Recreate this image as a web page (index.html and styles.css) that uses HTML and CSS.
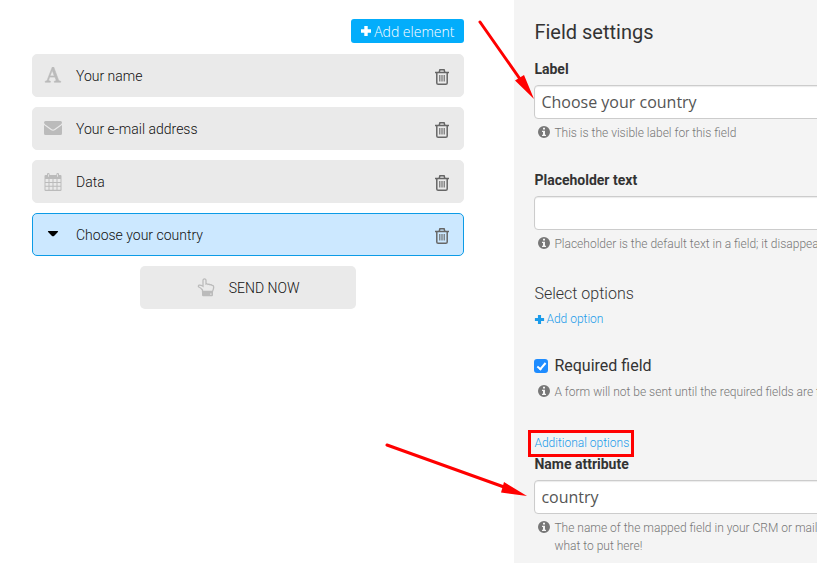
FILE: index.html
```html
<!DOCTYPE html>
<html lang="en">
  <head>
    <meta charset="utf-8" />
    <title>Form editor</title>
    <link rel="stylesheet" href="styles.css" />
  </head>
  <body>
    <svg class="sprite" aria-hidden="true">
      <symbol id="plus" viewBox="0 0 12 12">
        <path d="M4.300 1h3.400v3.300H11v3.400H7.700V11H4.300V7.700H1V4.300h3.300z" />
      </symbol>
      <symbol id="trash" viewBox="0 0 16 18">
        <g fill="none" stroke="currentColor" stroke-width="1.500">
          <path d="M1 4.500h14M5.200 4.200l.7-2.400h4.200l.7 2.400" />
          <path d="M2.800 4.500v10.400q0 1.400 1.400 1.400h7.600q1.400 0 1.400-1.400V4.500" />
          <path d="M5.800 7v6.500M8 7v6.500M10.200 7v6.500" stroke-width="1.100" />
        </g>
      </symbol>
      <symbol id="info" viewBox="0 0 12 12">
        <path fill-rule="evenodd" d="M6 0a6 6 0 1 1 0 12A6 6 0 0 1 6 0zM5 1.800v1.700h2V1.800zM4 4.700v1.200h1v2.900H4V10h4V8.800H7V4.700z" />
      </symbol>
    </svg>

    <div class="page">
      <main class="builder">
        <button type="button" class="add-element">
          <svg class="icon-plus"><use href="#plus" /></svg>
          Add element
        </button>

        <ul class="elements">
          <li class="element">
            <svg class="element-icon" viewBox="0 0 18 18">
              <path fill-rule="evenodd" stroke="currentColor" stroke-width=".6" d="M8.300 0h1.400l4.700 12.700q.5 1.500 2.300 1.600v.9h-6.400v-.9q2.200 0 1.700-1.500l-1-2.700H5.700l-.8 2.200q-.7 1.900 1.500 2v.9H1.200v-.9q1.600-.1 2.200-1.600zM6.100 8.900h4.200L8.200 3.300z" />
            </svg>
            <span class="element-name">Your name</span>
            <button type="button" class="delete" aria-label="Delete Your name">
              <svg><use href="#trash" /></svg>
            </button>
          </li>
          <li class="element">
            <svg class="element-icon" viewBox="0 0 18 18">
              <path d="M1.500 1h15Q18 1 18 2.500 18 3.600 16.800 4.500L10.500 9q-1.500 1-3 0L1.200 4.500Q0 3.600 0 2.500 0 1 1.500 1z" />
              <path d="M0 5l6.800 4.900q2.200 1.500 4.400 0L18 5v8.500q0 1.500-1.500 1.500h-15Q0 15 0 13.500z" />
            </svg>
            <span class="element-name">Your e-mail address</span>
            <button type="button" class="delete" aria-label="Delete Your e-mail address">
              <svg><use href="#trash" /></svg>
            </button>
          </li>
          <li class="element">
            <svg class="element-icon tall" viewBox="0 0 18 18">
              <path fill-rule="evenodd" d="M1.500 2H3V1q0-1 1.300-1t1.300 1v1h6.800V1q0-1 1.300-1T15 1v1h1.500q1 0 1 1v13.800q0 1.200-1 1.200h-15q-1 0-1-1.200V3q0-1 1-1zM1.500 6v2.900h3V6zm4 0v2.900h3V6zm4 0v2.900h3V6zm4 0v2.900h3V6zM1.500 9.900v2.900h3V9.900zm4 0v2.900h3V9.900zm4 0v2.900h3V9.900zm4 0v2.900h3V9.900zM1.500 13.800v3h3v-3zm4 0v3h3v-3zm4 0v3h3v-3zm4 0v3h3v-3zM4 1.200v2.600h.8V1.200zm9.200 0v2.600h.8V1.200z" />
            </svg>
            <span class="element-name">Data</span>
            <button type="button" class="delete" aria-label="Delete Data">
              <svg><use href="#trash" /></svg>
            </button>
          </li>
          <li class="element selected">
            <svg class="element-icon" viewBox="0 0 18 18">
              <path d="M4.500 5h9q1 0 .4 1L10 9.900q-1 .9-2 0L4.100 6q-.6-1 .4-1z" />
            </svg>
            <span class="element-name">Choose your country</span>
            <button type="button" class="delete" aria-label="Delete Choose your country">
              <svg><use href="#trash" /></svg>
            </button>
          </li>
        </ul>

        <button type="button" class="send">
          <svg viewBox="0 0 18 20">
            <path fill="none" stroke="currentColor" stroke-width="1.300" d="M5.500 13.500V12Q3.800 9.800 1.800 9 .8 8 1.900 7.200 3.500 6.700 6 8.300V2.200Q6.200.8 7.500.8T9 2.200V6q1.200-.5 2 .4 1.400-.5 2.100.4 1.400-.4 2 .6 1.600 0 1.600 1.700 0 2-1.200 4.400z" />
            <path fill-rule="evenodd" d="M5 13.500h11v3.600q0 1.200-1.200 1.200H6.200Q5 18.300 5 17.100zm8.200 1.900v1.300h1.300v-1.300z" />
          </svg>
          SEND NOW
        </button>
      </main>

      <aside class="settings">
        <form class="settings-form">
          <h2>Field settings</h2>

          <div class="field">
            <label class="caption" for="label">Label</label>
            <input type="text" id="label" value="Choose your country" />
            <p class="hint"><svg><use href="#info" /></svg>This is the visible label for this field</p>
          </div>

          <div class="field">
            <label class="caption" for="placeholder">Placeholder text</label>
            <input type="text" id="placeholder" />
            <p class="hint"><svg><use href="#info" /></svg>Placeholder is the default text in a field; it disappears</p>
          </div>

          <div class="field options">
            <h3>Select options</h3>
            <a class="link" href="#"><svg class="icon-plus"><use href="#plus" /></svg> Add option</a>
          </div>

          <div class="field required">
            <label class="check"><input type="checkbox" checked /> Required field</label>
            <p class="hint"><svg><use href="#info" /></svg>A form will not be sent until the required fields are filled</p>
          </div>

          <a class="link additional" href="#">Additional options</a>
          <div class="field">
            <label class="caption" for="name">Name attribute</label>
            <input type="text" id="name" value="country" />
            <p class="hint"><svg><use href="#info" /></svg>The name of the mapped field in your CRM or mailing<br />what to put here!</p>
          </div>
        </form>
      </aside>
    </div>

    <!-- arrows drawn over the editor -->
    <svg class="arrows" width="817" height="563" aria-hidden="true">
      <path d="M480 22L520 79M387 445L504 487" />
      <path class="head" d="M515 80.500L524 75l10 24zM504 482l-3 10.500 26 3.500z" />
    </svg>
  </body>
</html>
```
FILE: styles.css
```css
:root {
  --blue: #03a9f4;
  --link: #1a9bea;
  --panel: #f4f4f4;
  --item: #eaeaea;
  --text: #333;
  --mark: #f00;
}

* {
  box-sizing: border-box;
}

body {
  margin: 0;
  background: #fff;
  color: var(--text);
  font-family: Roboto, "Liberation Sans", sans-serif;
}

button {
  border: none;
  font-family: inherit;
  cursor: pointer;
}

svg {
  fill: currentColor;
}

.sprite {
  display: none;
}

.page {
  display: grid;
  grid-template-columns: 17fr 10fr;
  min-height: 100vh;
}

.builder {
  display: flex;
  flex-direction: column;
  padding: 19px 50px 0 32px;
}

.add-element {
  align-self: flex-end;
  display: flex;
  align-items: center;
  gap: 2px;
  height: 24px;
  padding: 0 10px 0 9px;
  border-radius: 3px;
  background: #03adfb;
  color: #fff;
  font-family: "Open Sans", sans-serif;
  font-size: 14px;
  font-weight: 300;
}

.icon-plus {
  width: 12px;
  height: 12px;
}

.elements {
  display: flex;
  flex-direction: column;
  gap: 10px;
  margin: 11px 0 10px;
  padding: 0;
  list-style: none;
}

.element {
  display: flex;
  align-items: center;
  height: 43px;
  padding: 0 13px 0 11px;
  border: 1px solid var(--item);
  border-radius: 5px;
  background: var(--item);
  font-size: 14px;
  font-weight: 300;
  color: #111;
}

.element-icon {
  width: 18px;
  height: 18px;
  margin-right: 14px;
  color: #bbb;
}

.element-name {
  flex: 1;
}

.delete {
  padding: 2px 0 0;
  background: none;
  color: #666;
}

.delete svg {
  display: block;
  width: 16px;
  height: 18px;
}

.selected {
  border-color: #0c9be6;
  background: #cce8ff;
}

.selected .element-icon {
  color: #000;
}

.send {
  display: flex;
  align-items: center;
  justify-content: center;
  gap: 14px;
  align-self: center;
  width: 50%;
  height: 43px;
  border-radius: 5px;
  background: var(--item);
  color: #111;
  font-size: 14px;
  font-weight: 300;
}

.send svg {
  width: 18px;
  height: 20px;
  color: #bbb;
}

.settings {
  padding: 20px 0 8px 20px;
  background: var(--panel);
  overflow: hidden;
}

/* wider than the panel, the rest is cut off at the window edge */
.settings-form {
  width: 400px;
}

h2,
h3 {
  margin: 0;
  line-height: 24px;
}

h2 {
  margin-bottom: 15px;
  font-size: 20px;
  font-weight: 400;
}

h3 {
  margin-bottom: 3px;
  font-size: 16px;
  font-weight: 300;
  line-height: 26px;
}

.field {
  margin-bottom: 28px;
}

.field:last-child {
  margin-bottom: 0;
}

.caption {
  display: block;
  margin-bottom: 6px;
  font-size: 14px;
  font-weight: 700;
  line-height: 20px;
}

input[type="text"] {
  display: block;
  width: 100%;
  height: 34px;
  padding: 0 6px;
  border: 1px solid #ccc;
  border-radius: 4px;
  background: #fff;
  box-shadow: inset 0 1px 1px rgba(0, 0, 0, 0.08);
  color: #555;
  font-family: "Open Sans", sans-serif;
  font-size: 16px;
}

.hint {
  margin: 5px 0 0;
  padding-left: 20px;
  color: #777;
  font-size: 12px;
  font-weight: 300;
  line-height: 18px;
  white-space: nowrap;
}

.hint svg {
  float: left;
  width: 12px;
  height: 12px;
  margin: 2px 0 0 -16px;
}

.link {
  display: flex;
  align-items: center;
  gap: 1px;
  width: max-content;
  color: var(--link);
  font-size: 12px;
  font-weight: 300;
  line-height: 18px;
  text-decoration: none;
}

.link .icon-plus {
  width: 11px;
  height: 11px;
}

.check {
  display: flex;
  align-items: center;
  gap: 6px;
  font-size: 16px;
  line-height: 24px;
}

.check input {
  appearance: none;
  display: flex;
  justify-content: center;
  width: 14px;
  height: 14px;
  margin: 0;
  border-radius: 3px;
  background: #1e8cff;
}

.check input:checked::after {
  content: "";
  width: 3px;
  height: 7px;
  margin-top: 2px;
  border: solid #fff;
  border-width: 0 2px 2px 0;
  transform: rotate(40deg);
}

.options {
  margin-bottom: 26px;
}

.required {
  margin-bottom: 33px;
}

.additional {
  position: relative;
  margin-bottom: 2px;
}

.additional::after {
  content: "";
  position: absolute;
  inset: -4px -5px -5px -6px;
  border: 3px solid var(--mark);
}

.arrows {
  position: absolute;
  top: 0;
  left: 0;
  fill: none;
  stroke: var(--mark);
  stroke-width: 3;
  stroke-linecap: round;
  pointer-events: none;
}

.arrows .head {
  fill: var(--mark);
  stroke: none;
}
```
